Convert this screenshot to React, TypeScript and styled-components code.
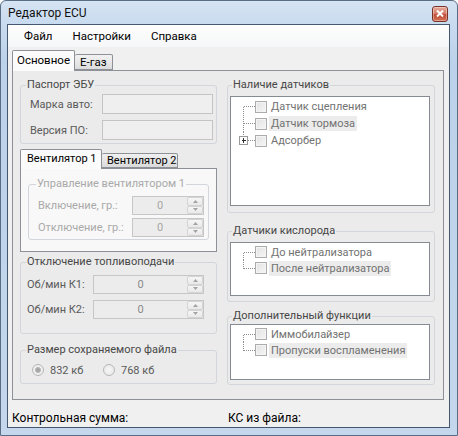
import React from 'react';
import styled, { createGlobalStyle } from 'styled-components';

const GlobalStyle = createGlobalStyle`
  html, body {
    margin: 0;
    padding: 0;
    background: #ffffff;
  }
  body {
    font-family: Roboto, 'Noto Sans', 'DejaVu Sans', sans-serif;
    font-size: 11px;
    color: #1e1e1e;
  }
  * {
    box-sizing: border-box;
  }
`;

type TreeItem = { label: string; shaded?: boolean; expander?: boolean };

const sensors: TreeItem[] = [
  { label: 'Датчик сцепления' },
  { label: 'Датчик тормоза', shaded: true },
  { label: 'Адсорбер', expander: true },
];

const oxygen: TreeItem[] = [
  { label: 'До нейтрализатора' },
  { label: 'После нейтрализатора', shaded: true },
];

const extras: TreeItem[] = [
  { label: 'Иммобилайзер' },
  { label: 'Пропуски воспламенения', shaded: true },
];

const TreeLines = ({
  first,
  last,
  expander,
  h,
}: {
  first: boolean;
  last: boolean;
  expander?: boolean;
  h: number;
}) => {
  const mid = Math.floor(h / 2) + 0.5;
  return (
    <svg width={24} height={h} viewBox={`0 0 24 ${h}`} shapeRendering="crispEdges">
      <line
        x1={12.5}
        y1={first ? mid : 0}
        x2={12.5}
        y2={last ? mid : h}
        stroke="#8e8e8e"
        strokeDasharray="1 1"
      />
      <line x1={13} y1={mid} x2={24} y2={mid} stroke="#8e8e8e" strokeDasharray="1 1" />
      {expander && (
        <g>
          <rect x={8.5} y={mid - 4} width={8} height={8} fill="#ffffff" stroke="#9a9a9a" />
          <line x1={10.5} y1={mid} x2={15} y2={mid} stroke="#2f2f2f" />
          <line x1={12.5} y1={mid - 2.5} x2={12.5} y2={mid + 2} stroke="#2f2f2f" />
        </g>
      )}
    </svg>
  );
};

const Tree = ({ items, height, rowHeight }: { items: TreeItem[]; height: number; rowHeight: number }) => (
  <TreeBox $h={height}>
    {items.map((it, i) => (
      <TreeRow key={it.label} $h={rowHeight}>
        <TreeLines first={i === 0} last={i === items.length - 1} expander={it.expander} h={rowHeight} />
        <CheckBox />
        <TreeText $shaded={it.shaded}>{it.label}</TreeText>
      </TreeRow>
    ))}
  </TreeBox>
);

const Arrow = ({ up }: { up?: boolean }) => (
  <svg width={5} height={3} viewBox="0 0 5 3">
    <polygon points={up ? '0,3 5,3 2.5,0' : '0,0 5,0 2.5,3'} fill="#a3a3a3" />
  </svg>
);

const SpinBox = ({ width, dim }: { width: number; dim?: boolean }) => (
  <Spin $w={width}>
    <SpinValue $dim={dim}>0</SpinValue>
    <SpinButtons>
      <SpinButton>
        <Arrow up />
      </SpinButton>
      <SpinButton>
        <Arrow />
      </SpinButton>
    </SpinButtons>
  </Spin>
);

const App = () => {
  return (
    <>
      <GlobalStyle />
      <Window>
        <TitleBar>
          <Title>Редактор ECU</Title>
          <CloseButton>
            <svg width={8} height={7} viewBox="0 0 8 7">
              <path d="M1 0.5 L7 6.5 M7 0.5 L1 6.5" stroke="#ffffff" strokeWidth={2} />
            </svg>
          </CloseButton>
        </TitleBar>
        <Client>
          <MenuBar>
            <MenuItem>Файл</MenuItem>
            <MenuItem>Настройки</MenuItem>
            <MenuItem>Справка</MenuItem>
          </MenuBar>
          <TabStrip>
            <MainTab $active>Основное</MainTab>
            <MainTab>E-газ</MainTab>
          </TabStrip>
          <TabPanel>
            <Column>
              <GroupBox>
                <Legend>Паспорт ЭБУ</Legend>
                <GroupContent $pad="2px 3px 3px 9px" $gap={6}>
                  <FieldRow $h={20}>
                    <FieldLabel>Марка авто:</FieldLabel>
                    <TextBox />
                  </FieldRow>
                  <FieldRow $h={20}>
                    <FieldLabel>Версия ПО:</FieldLabel>
                    <TextBox />
                  </FieldRow>
                </GroupContent>
              </GroupBox>

              <FanTabs>
                <FanTabStrip>
                  <FanTab $active $w={82}>
                    Вентилятор 1
                  </FanTab>
                  <FanTab $w={76}>Вентилятор 2</FanTab>
                </FanTabStrip>
                <FanPanel>
                  <GroupBox>
                    <Legend $disabled $indent={7}>
                      Управление вентилятором 1
                    </Legend>
                    <GroupContent $pad="5px 4px 2px 9px" $gap={3}>
                      <FieldRow $h={19}>
                        <FieldLabel $disabled>Включение, гр.:</FieldLabel>
                        <SpinBox width={72} dim />
                      </FieldRow>
                      <FieldRow $h={19}>
                        <FieldLabel $disabled>Отключение, гр.:</FieldLabel>
                        <SpinBox width={72} dim />
                      </FieldRow>
                    </GroupContent>
                  </GroupBox>
                </FanPanel>
              </FanTabs>

              <GroupBox $top={3}>
                <Legend>Отключение топливоподачи</Legend>
                <GroupContent $pad="6px 12px 14px 6px" $gap={6}>
                  <FieldRow $h={19}>
                    <FieldLabel>Об/мин К1:</FieldLabel>
                    <SpinBox width={111} />
                  </FieldRow>
                  <FieldRow $h={19}>
                    <FieldLabel>Об/мин К2:</FieldLabel>
                    <SpinBox width={111} />
                  </FieldRow>
                </GroupContent>
              </GroupBox>

              <GroupBox $top={9}>
                <Legend>Размер сохраняемого файла</Legend>
                <RadioRow>
                  <RadioItem>
                    <Radio $checked />
                    <RadioLabel>832 кб</RadioLabel>
                  </RadioItem>
                  <RadioItem>
                    <Radio />
                    <RadioLabel>768 кб</RadioLabel>
                  </RadioItem>
                </RadioRow>
              </GroupBox>
            </Column>

            <Column>
              <GroupBox>
                <Legend $indent={4}>Наличие датчиков</Legend>
                <GroupContent $pad="4px 4px 6px 2px">
                  <Tree items={sensors} height={110} rowHeight={17} />
                </GroupContent>
              </GroupBox>
              <GroupBox $top={11}>
                <Legend $indent={4}>Датчики кислорода</Legend>
                <GroupContent $pad="4px 4px 5px 2px">
                  <Tree items={oxygen} height={54} rowHeight={16} />
                </GroupContent>
              </GroupBox>
              <GroupBox $top={7}>
                <Legend $indent={4}>Дополнительный функции</Legend>
                <GroupContent $pad="1px 4px 4px 2px">
                  <Tree items={extras} height={56} rowHeight={16} />
                </GroupContent>
              </GroupBox>
            </Column>
          </TabPanel>
          <StatusBar>
            <StatusText>Контрольная сумма:</StatusText>
            <StatusText>КС из файла:</StatusText>
          </StatusBar>
        </Client>
      </Window>
    </>
  );
};

const Window = styled.div`
  width: 458px;
  height: 436px;
  border: 1px solid #596d85;
  border-radius: 6px 6px 0 0;
  background: linear-gradient(180deg, #d6e4f3 0px, #c9dbef 22px, #bcd2ea 60px, #c4d7ec 100%);
  padding: 0 7px 7px 6px;
  display: flex;
  flex-direction: column;
`;

const TitleBar = styled.div`
  height: 23px;
  display: flex;
  align-items: center;
  justify-content: space-between;
  padding: 0 2px 0 1px;
`;

const Title = styled.span`
  font-size: 12px;
  color: #111111;
  line-height: 16px;
`;

const CloseButton = styled.div`
  width: 16px;
  height: 16px;
  margin-top: 2px;
  border: 1px solid #7b3327;
  border-radius: 3px;
  background: linear-gradient(180deg, #e6a99b 0%, #d6806c 45%, #c14b35 55%, #d17256 100%);
  box-shadow: inset 0 0 0 1px rgba(255, 255, 255, 0.35);
  display: flex;
  align-items: center;
  justify-content: center;
`;

const Client = styled.div`
  flex: 1;
  min-height: 0;
  border: 1px solid #44576e;
  background: #f0f0f0;
  display: flex;
  flex-direction: column;
`;

const MenuBar = styled.div`
  height: 22px;
  flex: none;
  display: flex;
  align-items: center;
  padding-left: 6px;
  background: linear-gradient(180deg, #fdfdfd 0%, #f6f7f8 100%);
`;

const MenuItem = styled.span`
  padding: 0 10px;
  font-size: 11.5px;
  color: #000000;
`;

const TabStrip = styled.div`
  height: 23px;
  flex: none;
  display: flex;
  align-items: flex-end;
  padding-left: 4px;
`;

const MainTab = styled.div<{ $active?: boolean }>`
  position: relative;
  z-index: ${(p) => (p.$active ? 1 : 0)};
  height: ${(p) => (p.$active ? 21 : 16)}px;
  margin-bottom: ${(p) => (p.$active ? -1 : 0)}px;
  padding: 0 ${(p) => (p.$active ? 4 : 5)}px;
  border: 1px solid #8d9097;
  border-bottom: ${(p) => (p.$active ? 'none' : '1px solid #8d9097')};
  border-left: ${(p) => (p.$active ? '1px solid #8d9097' : 'none')};
  border-radius: 2px 2px 0 0;
  background: ${(p) => (p.$active ? '#fbfbfb' : 'linear-gradient(180deg, #f2f2f2, #dcdcdc)')};
  font-size: 11.5px;
  line-height: ${(p) => (p.$active ? 19 : 14)}px;
  color: #000000;
`;

const TabPanel = styled.div`
  flex: 1;
  min-height: 0;
  margin: 0 5px 0 4px;
  border: 1px solid #8d9097;
  background: #ebebeb;
  display: grid;
  grid-template-columns: 197px 208px;
  column-gap: 10px;
  align-items: start;
  padding: 7px 0 0 7px;
`;

const Column = styled.div`
  display: flex;
  flex-direction: column;
`;

const GroupBox = styled.fieldset<{ $top?: number }>`
  margin: ${(p) => p.$top ?? 0}px 0 0 0;
  padding: 0;
  min-width: 0;
  border: 1px solid #d2d6da;
  border-radius: 3px;
`;

const Legend = styled.legend<{ $disabled?: boolean; $indent?: number }>`
  margin-left: ${(p) => p.$indent ?? 5}px;
  padding: 0 1px;
  font-size: 11px;
  line-height: 14px;
  color: ${(p) => (p.$disabled ? '#a9a9a9' : '#474747')};
`;

const GroupContent = styled.div<{ $pad: string; $gap?: number }>`
  display: flex;
  flex-direction: column;
  gap: ${(p) => p.$gap ?? 0}px;
  padding: ${(p) => p.$pad};
`;

const FieldRow = styled.div<{ $h: number }>`
  height: ${(p) => p.$h}px;
  display: flex;
  align-items: center;
  justify-content: space-between;
`;

const FieldLabel = styled.span<{ $disabled?: boolean }>`
  font-size: 11px;
  white-space: nowrap;
  color: ${(p) => (p.$disabled ? '#a9a9a9' : '#5a5a5a')};
`;

const TextBox = styled.div`
  width: 111px;
  height: 20px;
  border: 1px solid #c4c4c4;
  background: #efefef;
`;

const Spin = styled.div<{ $w: number }>`
  width: ${(p) => p.$w}px;
  height: 19px;
  flex: none;
  display: flex;
  border: 1px solid #c6c6c6;
  background: #ececec;
`;

const SpinValue = styled.div<{ $dim?: boolean }>`
  flex: 1;
  text-align: center;
  font-size: 11px;
  line-height: 17px;
  color: ${(p) => (p.$dim ? '#a6a6a6' : '#8a8a8a')};
`;

const SpinButtons = styled.div`
  width: 16px;
  display: flex;
  flex-direction: column;
`;

const SpinButton = styled.div`
  flex: 1;
  display: flex;
  align-items: center;
  justify-content: center;
  border: 1px solid #d4d4d4;
  border-radius: 2px;
  background: linear-gradient(180deg, #f6f6f6, #e9e9e9);
`;

const FanTabs = styled.div`
  margin-top: 5px;
  display: flex;
  flex-direction: column;
`;

const FanTabStrip = styled.div`
  height: 19px;
  display: flex;
  align-items: flex-end;
`;

const FanTab = styled.div<{ $active?: boolean; $w: number }>`
  position: relative;
  z-index: ${(p) => (p.$active ? 1 : 0)};
  width: ${(p) => p.$w}px;
  height: ${(p) => (p.$active ? 20 : 15)}px;
  margin-bottom: ${(p) => (p.$active ? -1 : 0)}px;
  padding-left: ${(p) => (p.$active ? 6 : 5)}px;
  border: 1px solid #8d9097;
  border-bottom: ${(p) => (p.$active ? 'none' : '1px solid #8d9097')};
  border-left: ${(p) => (p.$active ? '1px solid #8d9097' : 'none')};
  border-radius: 2px 2px 0 0;
  background: ${(p) => (p.$active ? '#fbfbfb' : 'linear-gradient(180deg, #f0f0f0, #dadada)')};
  font-size: 11px;
  line-height: ${(p) => (p.$active ? 17 : 14)}px;
  color: #000000;
  white-space: nowrap;
`;

const FanPanel = styled.div`
  border: 1px solid #8d9097;
  background: #f8f8f8;
  padding: 8px 7px 11px 7px;
`;

const RadioRow = styled.div`
  display: flex;
  align-items: center;
  height: 16px;
  margin: 5px 0 5px 11px;
`;

const RadioItem = styled.div`
  width: 71px;
  display: flex;
  align-items: center;
  gap: 6px;
`;

const Radio = styled.span<{ $checked?: boolean }>`
  width: 12px;
  height: 12px;
  border-radius: 50%;
  border: 1px solid #b8b8b8;
  background: ${(p) =>
    p.$checked
      ? 'radial-gradient(circle, #9c9c9c 0, #b4b4b4 2.5px, #f2f2f2 3.5px, #e4e4e4 100%)'
      : 'radial-gradient(circle, #f6f6f6 0, #e6e6e6 100%)'};
`;

const RadioLabel = styled.span`
  font-size: 11px;
  color: #5a5a5a;
`;

const TreeBox = styled.div<{ $h: number }>`
  height: ${(p) => p.$h}px;
  border: 1px solid #868a92;
  background: #ffffff;
  padding-top: 1px;
`;

const TreeRow = styled.div<{ $h: number }>`
  height: ${(p) => p.$h}px;
  display: flex;
  align-items: center;
`;

const CheckBox = styled.span`
  width: 12px;
  height: 12px;
  flex: none;
  border: 1px solid #acacac;
  background: linear-gradient(135deg, #e2e2e2, #f6f6f6);
  box-shadow: inset 0 0 0 1px #f4f4f4;
`;

const TreeText = styled.span<{ $shaded?: boolean }>`
  margin-left: 2px;
  padding: 0 2px;
  line-height: 15px;
  font-size: 11px;
  color: #727272;
  background: ${(p) => (p.$shaded ? '#ececec' : 'transparent')};
  white-space: nowrap;
`;

const StatusBar = styled.div`
  height: 27px;
  flex: none;
  display: grid;
  grid-template-columns: 216px 1fr;
  align-items: end;
  padding: 0 0 1px 4px;
`;

const StatusText = styled.span`
  font-size: 12px;
  line-height: 16px;
  color: #000000;
`;

export default App;
